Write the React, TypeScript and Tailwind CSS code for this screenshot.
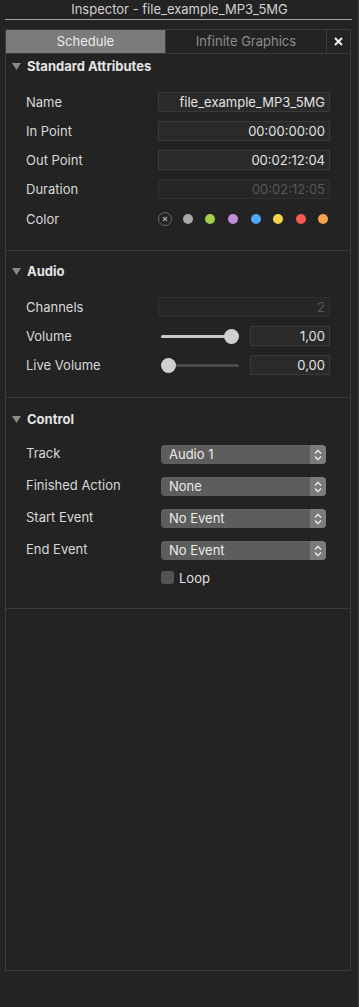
import React from "react";

function Tri() {
  return (
    <svg width="9" height="7" viewBox="0 0 9 7" className="shrink-0">
      <polygon points="0,0 9,0 4.5,7" fill="#8a8a8a" />
    </svg>
  );
}

function Header({ title }: { title: string }) {
  return (
    <div className="h-[24px] flex items-center pl-[6px]">
      <Tri />
      <span className="ml-[6px] mt-[2px] font-bold text-[#e4e4e4]">{title}</span>
    </div>
  );
}

function Row({ label, children }: { label: string; children: React.ReactNode }) {
  return (
    <div className="flex items-center h-[20px]">
      <div className="w-[132px] shrink-0 text-[#d9d9d9] mt-[2px]">{label}</div>
      {children}
    </div>
  );
}

function Field({ value, disabled, w = "w-[172px]" }: { value: string; disabled?: boolean; w?: string }) {
  return (
    <div
      className={
        "h-[20px] flex items-center justify-end pr-[4px] pt-[2px] border " +
        w +
        (disabled
          ? " bg-[#262626] border-[#303030] text-[#585858]"
          : " bg-[#2a2a2a] border-[#393939] text-[#e2e2e2]")
      }
    >
      {value}
    </div>
  );
}

function Slider({ pct }: { pct: number }) {
  return (
    <div className="relative w-[78px] h-[15px] ml-[3px] flex items-center">
      <div className="absolute left-0 right-0 h-[3px] rounded-full bg-[#4a4a4a]" />
      <div className="absolute left-0 h-[3px] rounded-full bg-[#c9c9c9]" style={{ width: `${pct * 70}px` }} />
      <div
        className="absolute w-[15px] h-[15px] rounded-full bg-[#d0d0d0]"
        style={{ left: `${pct * 63}px` }}
      />
    </div>
  );
}

function Select({ value }: { value: string }) {
  return (
    <div className="ml-[3px] w-[165px] h-[19px] rounded-[4px] bg-[#5d5d5d] flex items-center overflow-hidden">
      <div className="flex-1 pl-[8px] pt-[1px] text-[#ebebeb]">{value}</div>
      <div className="w-[16px] h-full bg-[#7b7b7b] flex items-center justify-center">
        <svg width="8" height="12" viewBox="0 0 8 12">
          <polyline points="1,4.5 4,1.5 7,4.5" fill="none" stroke="#f0f0f0" strokeWidth="1.3" />
          <polyline points="1,7.5 4,10.5 7,7.5" fill="none" stroke="#f0f0f0" strokeWidth="1.3" />
        </svg>
      </div>
    </div>
  );
}

function ControlRow({ label, value }: { label: string; value: string }) {
  return (
    <div className="flex items-center h-[19px]">
      <div className="w-[132px] shrink-0 text-[#d9d9d9] -mt-[1px]">{label}</div>
      <Select value={value} />
    </div>
  );
}

const dots = ["#a9a9a9", "#a5cf47", "#c08fd9", "#4ea7f9", "#f4d44d", "#f75a50", "#f5a44a"];

export default function App() {
  return (
    <div className="w-[359px] h-[1007px] bg-[#232323] font-['Inter','Noto_Sans',sans-serif] text-[13px] text-[#dcdcdc] border-r border-[#3d3d3d] overflow-hidden">
      <div className="h-[19px] flex items-center justify-center text-[#d2d2d2] pl-[1px]">
        Inspector - file_example_MP3_5MG
      </div>
      <div className="ml-[5px] w-[347px] h-px bg-[#a0a0a0]" />
      <div className="ml-[5px] mt-[9px] w-[346px] h-[942px] border border-[#3b3b3b] flex flex-col">
        <div className="h-[24px] flex border-b border-[#3b3b3b]">
          <div className="w-[159px] bg-[#7b7b7b] flex items-center justify-center text-[#ececec]">Schedule</div>
          <div className="w-[161px] border-l border-[#3b3b3b] flex items-center justify-center text-[#8e8e8e]">
            Infinite Graphics
          </div>
          <div className="flex-1 border-l border-[#3b3b3b] flex items-center justify-center">
            <svg width="9" height="9" viewBox="0 0 9 9">
              <line x1="1" y1="1" x2="8" y2="8" stroke="#f4f4f4" strokeWidth="2" />
              <line x1="8" y1="1" x2="1" y2="8" stroke="#f4f4f4" strokeWidth="2" />
            </svg>
          </div>
        </div>

        {/* Standard Attributes */}
        <div className="border-b border-[#3b3b3b] pb-[21px]">
          <Header title="Standard Attributes" />
          <div className="pl-[20px] mt-[14px] flex flex-col gap-[9px]">
            <Row label="Name"><Field value="file_example_MP3_5MG" /></Row>
            <Row label="In Point"><Field value="00:00:00:00" /></Row>
            <Row label="Out Point"><Field value="00:02:12:04" /></Row>
            <Row label="Duration"><Field value="00:02:12:05" disabled /></Row>
            <div className="mt-[1px]">
              <Row label="Color">
                <div className="flex -ml-[4px]">
                  <div className="w-[22.6px] flex justify-center">
                    <div className="w-[14px] h-[14px] rounded-full border border-[#6a6a6a] flex items-center justify-center">
                      <svg width="6" height="6" viewBox="0 0 6 6">
                        <line x1="1" y1="1" x2="5" y2="5" stroke="#9a9a9a" strokeWidth="1.4" />
                        <line x1="5" y1="1" x2="1" y2="5" stroke="#9a9a9a" strokeWidth="1.4" />
                      </svg>
                    </div>
                  </div>
                  {dots.map((c) => (
                    <div key={c} className="w-[22.6px] flex justify-center items-center">
                      <div className="w-[10px] h-[10px] rounded-full" style={{ background: c }} />
                    </div>
                  ))}
                </div>
              </Row>
            </div>
          </div>
        </div>

        {/* Audio */}
        <div className="border-b border-[#3b3b3b] pt-[8px] pb-[22px]">
          <Header title="Audio" />
          <div className="pl-[20px] mt-[14px] flex flex-col gap-[9px]">
            <Row label="Channels"><Field value="2" disabled /></Row>
            <Row label="Volume">
              <Slider pct={1} />
              <div className="ml-[11px]"><Field value="1,00" w="w-[80px]" /></div>
            </Row>
            <Row label="Live Volume">
              <Slider pct={0} />
              <div className="ml-[11px]"><Field value="0,00" w="w-[80px]" /></div>
            </Row>
          </div>
        </div>

        {/* Control */}
        <div className="border-b border-[#3b3b3b] pt-[9px] pb-[24px]">
          <Header title="Control" />
          <div className="pl-[20px] mt-[14px] flex flex-col gap-[13px]">
            <ControlRow label="Track" value="Audio 1" />
            <ControlRow label="Finished Action" value="None" />
            <ControlRow label="Start Event" value="No Event" />
            <ControlRow label="End Event" value="No Event" />
          </div>
          <div className="pl-[155px] mt-[11px] flex items-center h-[13px]">
            <div className="w-[13px] h-[13px] rounded-[3px] bg-[#535353]" />
            <span className="ml-[5px] mt-[2px] text-[#e0e0e0]">Loop</span>
          </div>
        </div>
      </div>
    </div>
  );
}
